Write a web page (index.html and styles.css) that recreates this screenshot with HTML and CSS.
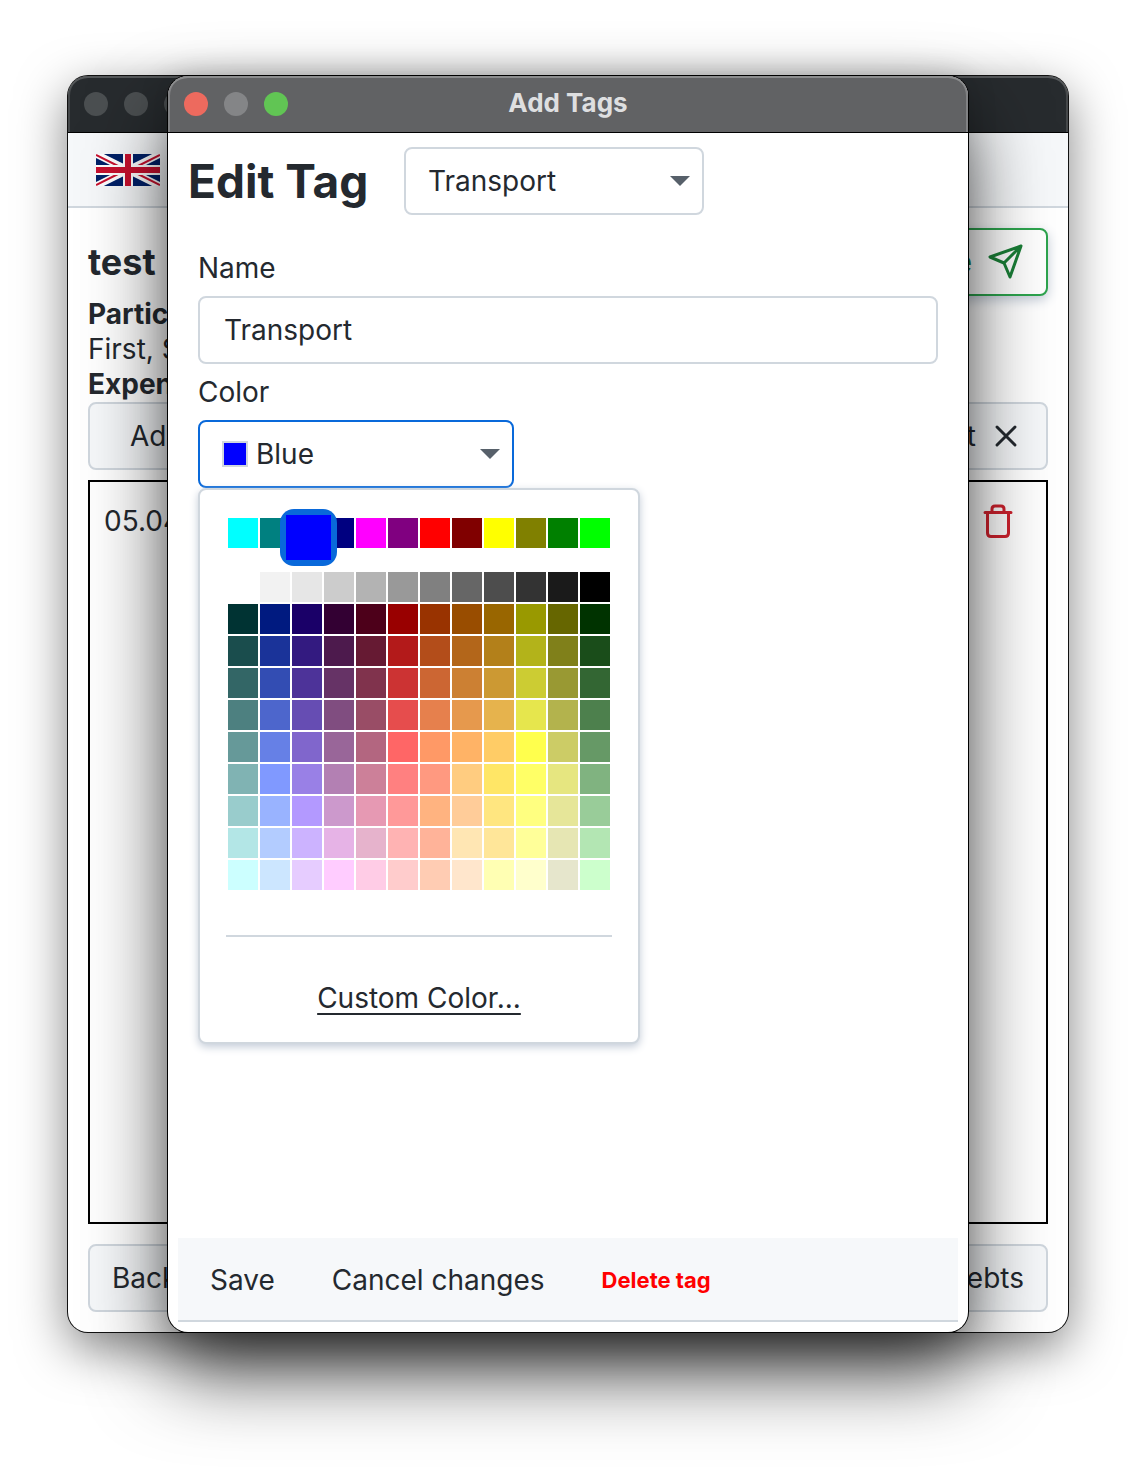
FILE: index.html
```html
<!DOCTYPE html>
<html lang="en">
<head>
<meta charset="utf-8">
<meta name="viewport" content="width=device-width, initial-scale=1">
<title>Add Tags</title>
<link rel="stylesheet" href="styles.css">
</head>
<body>
<div class="desktop">
  <section class="window window-back" aria-label="Event">
    <header class="titlebar">
      <span class="light"></span><span class="light"></span><span class="light"></span>
    </header>
    <div class="toolbar">
      <svg class="flag" viewBox="0 0 64 32" role="img" aria-label="English">
        <rect width="64" height="32" fill="#012169"/>
        <path d="M0 0L64 32M64 0L0 32" stroke="#fff" stroke-width="7"/>
        <path d="M0 1L30 16M34 16L64 31M64 1L36 15M28 17L0 31" stroke="#c8102e" stroke-width="2"/>
        <path d="M32 0V32M0 16H64" stroke="#fff" stroke-width="10"/>
        <path d="M32 0V32M0 16H64" stroke="#c8102e" stroke-width="6"/>
      </svg>
    </div>
    <div class="event">
      <div class="event-head">
        <h1 class="event-title">test</h1>
        <button class="btn btn-success" type="button">Invite
          <svg class="icon-send" viewBox="0 0 36 36" fill="none" stroke="currentColor" stroke-width="3" stroke-linejoin="round"><path d="M33 2L2 13L16 19L22 33Z M33 2L16 19"/></svg>
        </button>
      </div>
      <div class="details">
        <strong>Participants:</strong>
        <span>First, Second</span>
        <strong>Expenses:</strong>
      </div>
      <div class="row">
        <button class="btn btn-add" type="button">Add</button>
        <button class="btn" type="button">Reset
          <svg class="icon-x" viewBox="0 0 24 24" fill="none" stroke="currentColor" stroke-width="3" stroke-linecap="round"><path d="M3 3L21 21M21 3L3 21"/></svg>
        </button>
      </div>
      <div class="expenses">
        <div class="row">
          <span>05.04.</span>
          <button class="icon-btn" type="button" aria-label="Delete expense">
            <svg class="icon-trash" viewBox="0 0 30 34" fill="none" stroke="currentColor" stroke-width="3" stroke-linecap="round" stroke-linejoin="round"><path d="M2 8.500H28M9 8V5Q9 2 12 2H18Q21 2 21 5V8M4.500 9V29Q4.500 32.500 8 32.500H22Q25.500 32.500 25.500 29V9"/></svg>
          </button>
        </div>
      </div>
      <div class="row row-end">
        <button class="btn" type="button">Back</button>
        <button class="btn" type="button">Debts</button>
      </div>
    </div>
  </section>

  <section class="window window-front" aria-labelledby="win-title">
    <header class="titlebar">
      <span class="light light-close"></span><span class="light"></span><span class="light light-zoom"></span>
      <span class="win-title" id="win-title">Add Tags</span>
    </header>
    <main class="dialog">
      <div class="dialog-head">
        <h2 class="dialog-title">Edit Tag</h2>
        <select class="control tag-select" aria-label="Tag"><option>Transport</option></select>
      </div>
      <form class="form">
        <label class="label" for="name">Name</label>
        <input class="control name-input" id="name" type="text" value="Transport">
        <label class="label" for="color">Color</label>
        <button class="control color-picker" id="color" type="button" aria-expanded="true">
          <span class="chip"></span>Blue
        </button>
        <div class="palette">
          <div class="grid" id="basic"></div>
          <div class="grid" id="shades"></div>
          <hr class="rule">
          <a class="custom" href="#">Custom Color...</a>
        </div>
      </form>
      <footer class="actions">
        <button class="action" type="button">Save</button>
        <button class="action" type="button">Cancel changes</button>
        <button class="action action-delete" type="button">Delete tag</button>
      </footer>
    </main>
  </section>
</div>
<script src="palette.js"></script>
</body>
</html>
```
FILE: styles.css
```css
* { box-sizing: border-box; }

body {
  margin: 0;
  background: #fff;
  color: #24292f;
  font: 28px/36px Inter, "Liberation Sans", sans-serif;
}

button, input, select { font: inherit; color: inherit; }
button { cursor: pointer; }

/* Both windows share one grid cell, the front one inset over the other. */
.desktop {
  display: grid;
  min-height: 100vh;
  padding: 76px 68px 148px;
  overflow: hidden;
}

.window {
  grid-area: 1 / 1;
  display: flex;
  flex-direction: column;
  min-width: 0;
  border-radius: 20px;
  background: #fff;
}

.window-back {
  box-shadow: 0 0 0 1px #111, 0 16px 50px rgba(0, 0, 0, .5);
}

.window-front {
  z-index: 1;
  margin: 0 100px;
  box-shadow: 0 0 0 1px #000, 0 40px 80px rgba(0, 0, 0, .7), 0 0 30px rgba(0, 0, 0, .15);
}

.titlebar {
  position: relative;
  display: flex;
  align-items: center;
  gap: 16px;
  height: 57px;
  padding: 0 16px;
  border-bottom: 1px solid #000;
  border-radius: 20px 20px 0 0;
  background: #272b2e;
  box-shadow: inset 0 2px #55585a, inset 2px 0 #45484a, inset -2px 0 #45484a;
}

.window-front .titlebar {
  background: #616264;
  box-shadow: inset 0 2px #8c8d8e, inset 2px 0 #818284, inset -2px 0 #818284;
}

.light { width: 24px; height: 24px; border-radius: 50%; background: #4b4f51; }
.window-front .light { background: #848587; }
.window-front .light-close { background: #ed6a5e; }
.window-front .light-zoom { background: #61c554; }

.win-title {
  position: absolute;
  inset: 9px 0 auto;
  text-align: center;
  font-size: 26px;
  font-weight: 700;
  color: #dedfe0;
}

.toolbar {
  height: 75px;
  padding: 21px 28px;
  border-bottom: 2px solid #d0d7de;
  background: #f6f8fa;
}

.flag { display: block; width: 64px; height: 32px; }

.event {
  flex: 1;
  display: flex;
  flex-direction: column;
  padding: 20px;
}

.event-head, .row { display: flex; align-items: center; justify-content: space-between; }
.event-title { margin: 0; font-size: 36px; line-height: 44px; }

.details { display: flex; flex-direction: column; padding-top: 1px; line-height: 35px; }

.btn {
  display: flex;
  align-items: center;
  gap: 16px;
  height: 68px;
  padding: 0 22px;
  border: 2px solid #d0d7de;
  border-radius: 8px;
  background: #f6f8fa;
}

.btn-add { padding-left: 40px; }
.btn-success {
  border-color: #2da44e;
  background: #fff;
  color: #1a7f37;
  box-shadow: 0 4px 12px #c4ccd8;
}

.icon-send { width: 36px; height: 36px; }
.icon-x { width: 24px; height: 24px; margin: 0 6px 0 2px; }
.icon-trash { display: block; width: 30px; height: 34px; }

.icon-btn { padding: 0; border: 0; background: none; color: #cf222e; }

.expenses {
  flex: 1;
  margin: 10px 0 20px;
  padding: 21px 33px 20px 14px;
  border: 2px solid #000;
}

.dialog {
  flex: 1;
  display: flex;
  flex-direction: column;
  padding: 14px 10px 10px;
}

.dialog-head { display: flex; align-items: center; gap: 50px; padding-left: 10px; }
.dialog-title { width: 166px; margin: 0; font-size: 46px; line-height: 56px; white-space: nowrap; }

.control {
  height: 68px;
  padding: 0 24px;
  border: 2px solid #d0d7de;
  border-radius: 8px;
  background-color: #fff;
}

.tag-select, .color-picker {
  appearance: none;
  background-image: url("data:image/svg+xml,%3Csvg xmlns='http://www.w3.org/2000/svg' viewBox='0 0 20 10'%3E%3Cpath d='M0 0H20L10 10Z' fill='%2357606a'/%3E%3C/svg%3E");
  background-repeat: no-repeat;
  background-position: right 12px center;
  background-size: 20px 10px;
}

.tag-select { width: 300px; padding: 0 22px; }
.form { display: flex; flex-direction: column; align-items: flex-start; padding: 31px 20px 0; }
.label { margin: 4px 0 10px; }
.name-input { width: 100%; margin-bottom: 6px; }

.color-picker {
  display: flex;
  align-items: center;
  gap: 8px;
  width: 316px;
  padding: 0 22px;
  border-color: #0969da;
}

.chip { width: 26px; height: 26px; border: 2px solid #d0d7de; background: #00f; }

.palette {
  width: 442px;
  padding: 28px 26px 26px;
  border: 2px solid #d0d7de;
  border-radius: 8px;
  background: #fff;
  box-shadow: 0 3px 8px #c4ccd8;
  text-align: center;
}

.grid { display: grid; grid-template-columns: repeat(12, 30px); gap: 2px; margin: 0 2px 24px; }

.swatch { position: relative; height: 30px; padding: 0; border: 0; background: var(--swatch); }

/* The chosen swatch is enlarged over its neighbours: a square in a rounded frame. */
.swatch[aria-pressed="true"]::after {
  content: "";
  position: absolute;
  inset: -9px -15px -18px -12px;
  z-index: 1;
  border-radius: 14px;
  background: linear-gradient(var(--swatch), var(--swatch)) center / 45px 45px no-repeat #0969da;
}

.rule { height: 2px; margin: 45px 0 43px; border: 0; background: #d0d7de; }

.custom { color: inherit; text-underline-offset: 5px; text-decoration-thickness: 2px; }

.actions {
  display: flex;
  align-items: center;
  gap: 57px;
  height: 84px;
  margin-top: auto;
  padding: 2px 32px 0;
  border-bottom: 2px solid #d0d7de;
  background: #f6f8fa;
}

.action { padding: 0; border: 0; background: none; white-space: nowrap; }
.action-delete { color: #f00; font-size: 22px; font-weight: 700; }
```
FILE: palette.js
```js
const basic = "00ffff 008080 0000ff 000080 ff00ff 800080 ff0000 800000 ffff00 808000 008000 00ff00";

const shades = `
ffffff f2f2f2 e6e6e6 cccccc b3b3b3 999999 808080 666666 4d4d4d 333333 1a1a1a 000000
003333 001a80 1a0068 330033 4d001a 990000 993300 994d00 996600 999900 666600 003300
1a4d4d 1a3399 331a80 4d1a4d 661a33 b31a1a b34d1a b3661a b3801a b3b31a 80801a 1a4d1a
336666 334db3 4d3399 663366 80334d cc3333 cc6633 cc8033 cc9933 cccc33 999933 336633
4d8080 4d66cc 664db3 804d80 994d66 e64d4d e6804d e6994d e6b34d e6e64d b3b34d 4d804d
669999 6680e6 8066cc 996699 b36680 ff6666 ff9966 ffb366 ffcc66 ffff4d cccc66 669966
80b3b3 8099ff 9980e6 b380b3 cc8099 ff8080 ff9980 ffcc80 ffe666 ffff66 e6e680 80b380
99cccc 99b3ff b399ff cc99cc e699b3 ff9999 ffb380 ffcc99 ffe680 ffff80 e6e699 99cc99
b3e6e6 b3ccff ccb3ff e6b3e6 e6b3cc ffb3b3 ffb399 ffe6b3 ffe699 ffff99 e6e6b3 b3e6b3
ccffff cce6ff e6ccff ffccff ffcce6 ffcccc ffccb3 ffe6cc ffffb3 ffffcc e6e6cc ccffcc`;

function fill(id, list) {
  const grid = document.getElementById(id);
  for (const hex of list.trim().split(/\s+/)) {
    const swatch = document.createElement("button");
    swatch.type = "button";
    swatch.className = "swatch";
    swatch.style.setProperty("--swatch", "#" + hex);
    swatch.setAttribute("aria-label", "#" + hex);
    swatch.setAttribute("aria-pressed", String(id === "basic" && hex === "0000ff"));
    grid.append(swatch);
  }
}

fill("basic", basic);
fill("shades", shades);
```
